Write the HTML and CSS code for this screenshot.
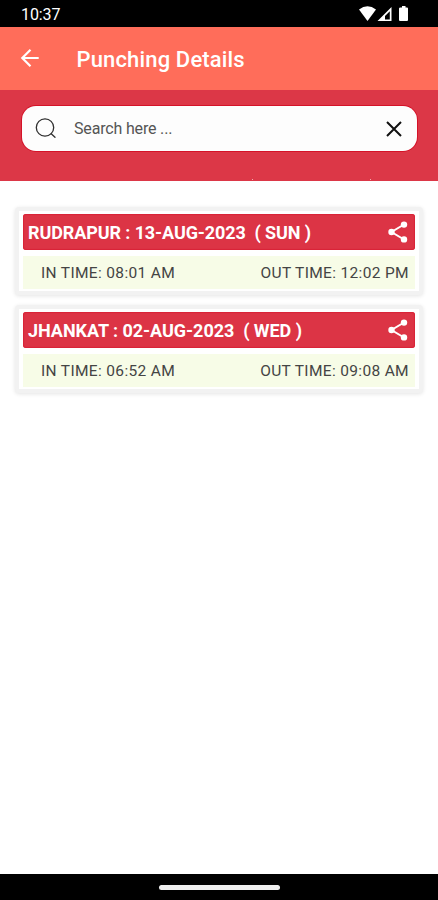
FILE: index.html
```html
<!DOCTYPE html>
<html lang="en">
<head>
<meta charset="utf-8">
<title>Punching Details</title>
<link rel="stylesheet" href="styles.css">
</head>
<body>
<div class="screen">
  <div class="status">
    <span class="clock">10:37</span>
    <svg class="status-icons" width="52" height="18" viewBox="0 0 52 18" fill="#fff">
      <path d="M1 4.6Q9.500-2 18 4.600L9.500 16Z"/>
      <path fill-rule="evenodd" d="M33.500 2V16H19.500ZM31.800 6.200L27 11V14.400H31.800Z"/>
      <path d="M42.500 2.500H44V1H47.500V2.500H49Q50 2.500 50 3.500V15Q50 16 49 16H42Q41 16 41 15V3.500Q41 2.500 42.500 2.500Z"/>
    </svg>
  </div>
  <header class="appbar">
    <svg class="back" width="20" height="20" viewBox="0 0 20 20" fill="none" stroke="#fff" stroke-width="2.200"><path d="M18.700 10H2.500M10.500 1.800L2.300 10L10.500 18.200"/></svg>
    <h1>Punching Details</h1>
  </header>
  <div class="search-band">
    <div class="search">
      <svg class="lens" width="22" height="22" viewBox="0 0 22 22" fill="none" stroke="#303030" stroke-width="1.300" stroke-linecap="round"><circle cx="10" cy="9.500" r="8.700"/><path d="M16.200 15.700L20 19.300"/></svg>
      <span class="placeholder">Search here ...</span>
      <svg class="clear" width="16" height="16" viewBox="0 0 16 16" fill="none" stroke="#111" stroke-width="2"><path d="M1 1L15 15M15 1L1 15"/></svg>
    </div>
  </div>
  <main class="list">
    <article class="card">
      <div class="card-head">
        <span class="place rudrapur">RUDRAPUR : 13-AUG-2023 &nbsp;( SUN )</span>
        <svg width="20" height="22" viewBox="0 0 20 22" fill="#fff"><path d="M16 3.500L3.500 11L16 18.500" fill="none" stroke="#fff" stroke-width="2"/><circle cx="16" cy="3.600" r="3.200"/><circle cx="3.500" cy="11" r="3.200"/><circle cx="16" cy="18.400" r="3.200"/></svg>
      </div>
      <div class="times"><span>IN TIME: 08:01 AM</span><span>OUT TIME: 12:02 PM</span></div>
    </article>
    <article class="card">
      <div class="card-head">
        <span class="place jhankat">JHANKAT : 02-AUG-2023 &nbsp;( WED )</span>
        <svg width="20" height="22" viewBox="0 0 20 22" fill="#fff"><path d="M16 3.500L3.500 11L16 18.500" fill="none" stroke="#fff" stroke-width="2"/><circle cx="16" cy="3.600" r="3.200"/><circle cx="3.500" cy="11" r="3.200"/><circle cx="16" cy="18.400" r="3.200"/></svg>
      </div>
      <div class="times"><span>IN TIME: 06:52 AM</span><span>OUT TIME: 09:08 AM</span></div>
    </article>
  </main>
  <footer class="navbar"><div class="handle"></div></footer>
</div>
</body>
</html>
```
FILE: styles.css
```css
* { box-sizing: border-box; }
body { margin: 0; font-family: Roboto, sans-serif; background: #fff; }
svg { display: block; flex: none; }
.screen { width: 438px; height: 900px; display: flex; flex-direction: column; overflow: hidden; }
.status { height: 27px; flex: none; background: #000; display: flex; justify-content: space-between; padding: 5px 28px 0 21px; }
.clock { color: #fff; font-size: 16px; line-height: 19px; letter-spacing: -0.1px; }
.appbar { height: 63px; flex: none; background: #ff6d5a; display: flex; align-items: center; padding: 2px 20px 0; }
.back { margin-top: -3px; }
.appbar h1 { margin: 0 0 0 36.500px; color: #fff; font-size: 22px; font-weight: 500; line-height: 28px; letter-spacing: 0.150px; white-space: nowrap; }
.search-band { height: 91px; flex: none; padding: 16px 21px 0 22px; background: linear-gradient(#f3a9ae, #f3a9ae) 252px 89px / 1px 1px no-repeat, linear-gradient(#f3a9ae, #f3a9ae) 370px 89px / 1px 1px no-repeat, #dc3747; }
.search { height: 45px; border-radius: 14px; background: #fdfdfd; box-shadow: 0 0 0 1px #d51228; display: flex; align-items: center; padding: 0 15px 0 13px; }
.placeholder { margin-left: 17px; font-size: 16px; font-weight: 400; color: #555; letter-spacing: -0.170px; white-space: pre; }
.clear { margin-left: auto; }
.list { flex: 1; padding: 26px 15px 0; display: flex; flex-direction: column; gap: 10px; }
.card { height: 88px; border: 4px solid #f2f2f2; border-radius: 4px; background: #fff; box-shadow: 0 1px 4px #e4e4e4; padding: 3px 4px 2px; }
.card-head { height: 36px; background: #dc3445; border-radius: 3px; display: flex; align-items: center; justify-content: space-between; padding: 0 7px 0 5px; box-shadow: inset 0 0 1px 1px #d92337; }
.place { color: #fff; font-size: 18px; font-weight: 700; white-space: nowrap; }
.rudrapur { letter-spacing: -0.100px; }
.jhankat { letter-spacing: -0.040px; }
.times { height: 33px; margin-top: 6px; background: #f7fce7; display: flex; align-items: center; justify-content: space-between; padding: 0 6px 0 18px; color: #444; font-size: 15.500px; letter-spacing: 0.340px; white-space: nowrap; }
.navbar { height: 26px; flex: none; background: #000; display: flex; justify-content: center; padding-top: 11px; }
.handle { width: 121px; height: 5px; border-radius: 3px; background: #eee; }
```
